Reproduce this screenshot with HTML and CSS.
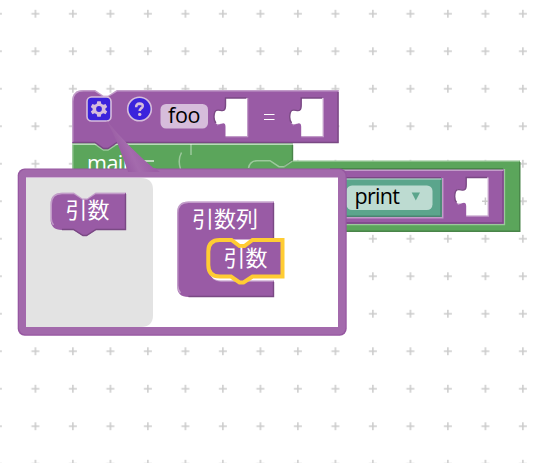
FILE: index.html
```html
<!DOCTYPE html>
<html lang="ja">
<head>
<meta charset="utf-8">
<title>Blocks</title>
<link rel="stylesheet" href="styles.css">
</head>
<body>
<svg class="workspace" width="552" height="463" viewBox="0 0 552 463">
  <defs>
    <pattern id="grid" x="16.8" y="-5" width="37.5" height="37.5" patternUnits="userSpaceOnUse">
      <path class="cross" d="M14.6 18.75h8M18.6 14.75v8"/>
    </pattern>
    <linearGradient id="tail" x1="114" y1="150" x2="139" y2="138" gradientUnits="userSpaceOnUse">
      <stop offset="0" stop-color="#9657a1"/><stop offset=".5" stop-color="#a46bad"/><stop offset="1" stop-color="#9c5ea6"/>
    </linearGradient>
    <path id="socket" d="M0 0H21.5V38H0V28.8C0 19-11 34-11.5 19C-11 4 0 20 0 7.2Z"/>
    <g id="hole">
      <use href="#socket" class="white"/>
      <path class="dark" d="M21 0H0V7.2C0 20-11 4-11.5 19C-11.4 22-10.7 24-9.5 25"/>
      <path class="light" d="M22 0V38.5H0M-8.5 26.8L-2 24"/>
    </g>
  </defs>
  <rect width="552" height="463" fill="url(#grid)"/>

  <g class="main-block">
    <path class="green" d="M72 143H292.5V160.5H520V231.5H72Z"/>
    <path class="light" d="M72.7 231V144.3H292M293 161H519.5"/>
    <path class="green-dark" d="M292.5 145V160L284 166.5M519.8 162V231.2H340"/>
    <path class="light" d="M191 144V155M181.5 152.5Q177.5 160 180.5 169M248.5 168Q250 160.7 257 160.7H270L279 166.7H284L292.5 161"/>
    <path class="purple" d="M330 169H504V224H330Z"/>
    <path class="green-dark" d="M330 168.7H503"/>
    <path class="light" d="M330 170.2H503M504.4 169V224.5H330"/>
    <path class="purple-dark" d="M503 171V223H330"/>
    <path class="teal" d="M330 178H442V217H330Z"/>
    <path class="dark" d="M330 177.7H441"/>
    <path class="light" d="M330 179H441M442.7 178V217.8H330"/>
    <path class="teal-dark" d="M441 180V216.3H330"/>
    <rect class="field-teal" x="346.5" y="185.5" width="86" height="24.5" rx="5.5"/>
    <text class="field-label" x="354.5" y="204" textLength="45.5">print</text>
    <path class="arrow" d="M411.7 192.5H420L415.8 200.5Z"/>
    <use href="#hole" x="466.2" y="177.5"/>
    <path class="cross" d="M482 201.2h6M485.4 197.5v7.5"/>
    <text class="label" x="87" y="170.5" textLength="49">main</text>
    <path class="equals" d="M143 161H154"/>
  </g>

  <g class="definition-block">
    <path class="purple" d="M72 101.5Q72 90 83.5 90H95L103.5 95.8H108L117 90H338.5V143H117L108 149H103.5L95 143H72Z"/>
    <path class="light" d="M72.7 142V101.5Q72.7 90.8 83.5 90.8H95L103.5 96.3H108L117 90.8H338M72 144.1H95L103.5 150H108L117 144.1H292"/>
    <path class="purple-dark" d="M338 92V142.5H117L108 148.5H103.5L95 142.5H73"/>
    <rect class="icon" x="87" y="97" width="24" height="24" rx="4.5"/>
    <g transform="translate(99 109)" class="gear">
      <path d="M-1.7-7.7H1.7L2.3-5.3L4.3-4.2L6.6-5L8.2-2L6.4-.6V1L8.2 2.4L6.6 5.2L4.3 4.3L2.3 5.3L1.7 7.7H-1.7L-2.3 5.3L-4.3 4.3L-6.6 5.2L-8.2 2.4L-6.4 1V-.6L-8.2-2L-6.6-5L-4.3-4.2L-2.3-5.3Z"/>
      <circle r="2.9"/>
    </g>
    <circle class="icon" cx="139.5" cy="109" r="11.8"/>
    <path class="question" d="M136.2 107.3Q136 103.6 139.6 103.6Q143 103.7 142.7 106.2Q142.5 107.6 140.8 108.7Q139.7 109.5 139.7 111"/>
    <circle class="dot" cx="139.7" cy="114.4" r="1.7"/>
    <rect class="field" x="160.5" y="104" width="47.5" height="24.5" rx="5.5"/>
    <text class="field-label" x="168" y="123.3" textLength="32.5">foo</text>
    <use href="#hole" x="225.5" y="98"/>
    <path class="equals" d="M264 114.5H274.5M264 119.5H274.5"/>
    <use href="#hole" x="301.2" y="98"/>
  </g>

  <g class="bubble">
    <path fill="url(#tail)" d="M106 120Q129 148 158 172H128Q118 141 106 120Z"/>
    <rect class="bubble-edge" x="17.7" y="168.5" width="329" height="167.3" rx="7"/>
    <rect class="bubble-frame" x="19" y="169.5" width="326.5" height="165" rx="6.5"/>
    <path fill="url(#tail)" d="M127 168L155 168L160 172H128Z"/>
    <rect class="white" x="26" y="177.5" width="312" height="149.5"/>
    <path class="flyout" d="M26 178H141Q153 178 153 190V315Q153 327 141 327H26Z"/>

    <path class="purple" d="M50.5 204.5Q50.5 192.7 62 192.7H74L82.5 198.5H87L95.5 192.7H126V230H96L86.5 236H83L73.5 230H62Q50.5 230 50.5 218.5Z"/>
    <path class="light" d="M53.5 225Q51.2 222 51.2 218.5V204.5Q51.2 193.4 62 193.4H74L82.5 199H87L95.5 193.4H125"/>
    <path class="purple-dark" d="M125.5 194V229.5H96L86.5 235.5H83L73.5 229.5H62"/>
    <text class="label kanji" x="65.5" y="218">引数</text>

    <path class="purple" d="M177 213Q177 201.5 188.5 201.5H274V239.5H221Q209.5 239.5 209.5 251V269.5Q209.5 280.5 221 280.5H274V297H188.5Q177 297 177 285.5Z"/>
    <path class="light" d="M180.5 293Q177.7 290 177.7 285.5V213Q177.7 202.2 188.5 202.2H273.5M213 278.2Q216.5 281 221 281H273.5"/>
    <path class="purple-dark" d="M273.5 203V239M273.5 282V296.5H188.5"/>
    <text class="label kanji" x="192" y="227">引数列</text>
    <path class="purple selected" d="M208.3 251.5Q208.3 240 219.8 240H231.5L239.5 246H244.5L252.5 240H282.5V276.5H252.5L243.5 282.5H239.5L231 276.5H219.8Q208.3 276.5 208.3 265Z"/>
    <text class="label kanji" x="223.5" y="266">引数</text>
  </g>
</svg>
</body>
</html>
```
FILE: styles.css
```css
body { margin: 0; background: #fff; overflow: hidden; }
.workspace { display: block; }
.cross { stroke: #cbcbcb; stroke-width: 1.5; fill: none; }
.white { fill: #fff; }
.purple { fill: #995ba5; }
.green { fill: #5ba55b; }
.teal { fill: #5ba58c; }
.light { fill: none; stroke: #fff; stroke-opacity: .4; stroke-width: 1.5; }
.dark, .purple-dark { fill: none; stroke: #7a4984; stroke-width: 1.4; }
.green-dark { fill: none; stroke: #498449; stroke-width: 1.4; }
.teal-dark { fill: none; stroke: #498470; stroke-width: 1.4; }
.field { fill: #d6bddb; }
.field-teal { fill: #bddbd1; }
.arrow { fill: #5ba58c; }
.label, .field-label { font-family: "Open Sans", "Noto Sans", "Noto Sans CJK JP", sans-serif; font-size: 21.5px; }
.label { fill: #fff; }
.kanji { font-family: "Noto Sans CJK JP", sans-serif; font-size: 22px; font-weight: 400; }
.field-label { fill: #000; }
.icon { fill: #3b23dc; stroke: #d6bddb; stroke-width: 1.6; }
.gear { fill: #d6bddb; }
.gear circle { fill: #3b23dc; }
.question { fill: none; stroke: #d6bddb; stroke-width: 2.6; }
.dot { fill: #d6bddb; }
.equals { stroke: #fff; stroke-width: 1.2; fill: none; }
.bubble-edge { fill: #9657a1; }
.bubble-frame { fill: #a36aac; }
.flyout { fill: #e3e3e3; }
.selected { stroke: #fc3; stroke-width: 4; }
```
